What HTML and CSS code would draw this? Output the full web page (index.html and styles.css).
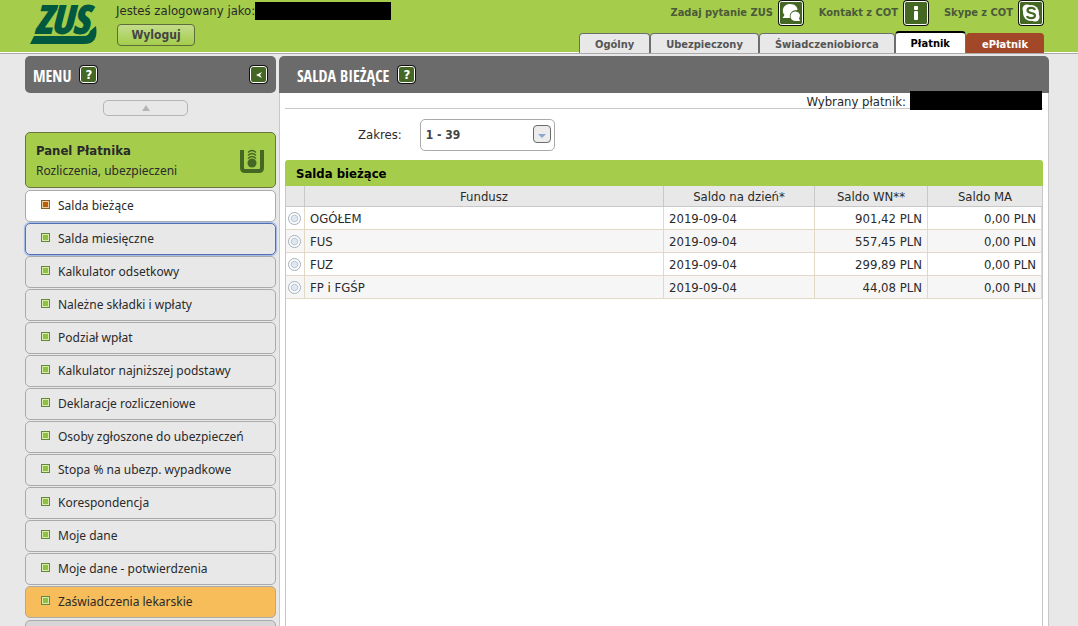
FILE: index.html
```html
<!DOCTYPE html>
<html lang="pl">
<head>
<meta charset="utf-8">
<title>Salda bieżące</title>
<link rel="stylesheet" href="styles.css">
</head>
<body>
<header class="top">
  <a class="logo" href="#" aria-label="ZUS">
    <svg viewBox="0 0 68 43" width="68" height="43">
      <text class="logo-text" x="5" y="31">ZUS</text>
      <path d="M4 34H54Q59 34 60 29L66 24Q69 42 54 42H0Z" fill="#00583f"/>
    </svg>
  </a>
  <div class="login">
    <div class="login-line">Jesteś zalogowany jako:<span class="redacted name"></span></div>
    <button class="logout" type="button">Wyloguj</button>
  </div>
  <div class="top-right">
    <nav class="contacts">
      <a href="#">Zadaj pytanie ZUS
        <svg class="contact-icon" viewBox="0 0 26 26"><rect class="edge" x=".5" y=".5" width="25" height="25" rx="3"/><rect class="face" x="1.5" y="1.5" width="23" height="23" rx="2"/><path d="M12 4C17 4 19.500 7 19.500 10C14 10 11 13 12 18H4.500L6.500 15C3 11 5 4 12 4Z" fill="#fff"/><path d="M17 11.500C22 11.500 23 16 21 18L22 21H17C11 21 11 11.500 17 11.500Z" fill="#fff"/></svg></a>
      <a href="#">Kontakt z COT
        <svg class="contact-icon" viewBox="0 0 26 26"><rect class="edge" x=".5" y=".5" width="25" height="25" rx="3"/><rect class="face" x="1.5" y="1.5" width="23" height="23" rx="2"/><rect x="11" y="6" width="4" height="4" rx="1" fill="#fff"/><rect x="11" y="11" width="4" height="9" rx="1" fill="#fff"/></svg></a>
      <a href="#">Skype z COT
        <svg class="contact-icon" viewBox="0 0 26 26"><rect class="edge" x=".5" y=".5" width="25" height="25" rx="3"/><rect class="face" x="1.5" y="1.5" width="23" height="23" rx="2"/><circle cx="13" cy="13" r="8" fill="#fff"/><circle cx="9" cy="9" r="4.5" fill="#fff"/><circle cx="17" cy="17" r="4.5" fill="#fff"/><path d="M17 10C16 7 9.500 7 9.500 10.500C9.500 14 17 12 17 15.500C17 19 10 19 9 16" fill="none" stroke="#446823" stroke-width="2.200"/></svg></a>
    </nav>
    <nav class="tabs">
      <a class="tab" href="#">Ogólny</a>
      <a class="tab" href="#">Ubezpieczony</a>
      <a class="tab" href="#">Świadczeniobiorca</a>
      <a class="tab active" href="#">Płatnik</a>
      <a class="tab red" href="#">ePłatnik</a>
    </nav>
  </div>
</header>
<div class="page">
  <aside class="side">
    <div class="bar">
      <h2>MENU</h2>
      <button class="mini" type="button" aria-label="Pomoc">?</button>
      <button class="mini collapse" type="button" aria-label="Zwiń menu"><svg viewBox="0 0 8 8" width="8" height="8"><path d="M7 1L5 4L7 7L1 4Z" fill="#fff"/></svg></button>
    </div>
    <button class="scroll-up" type="button" aria-label="W górę"><svg viewBox="0 0 8 6" width="8" height="6"><path d="M4 0L8 6H0Z" fill="#b5b5b5"/></svg></button>
    <a class="panel" href="#">
      <span class="panel-text"><strong>Panel Płatnika</strong><span>Rozliczenia, ubezpieczeni</span></span>
      <svg viewBox="0 0 24 24" width="24" height="24"><path d="M2 1V19Q2 22 5 22H19Q22 22 22 19V1" fill="none" stroke="#446823" stroke-width="4"/><circle cx="12" cy="14" r="4.500" fill="#446823"/><path d="M8 9.500Q12 5.500 16 9.500M8 6.500Q12 2.500 16 6.500M8 3.500Q12 -.5 16 3.500" fill="none" stroke="#446823" stroke-width="1.500"/></svg>
    </a>
    <nav class="menu">
      <a class="item current" href="#">Salda bieżące</a>
      <a class="item focused" href="#">Salda miesięczne</a>
      <a class="item" href="#">Kalkulator odsetkowy</a>
      <a class="item" href="#">Należne składki i wpłaty</a>
      <a class="item" href="#">Podział wpłat</a>
      <a class="item" href="#">Kalkulator najniższej podstawy</a>
      <a class="item" href="#">Deklaracje rozliczeniowe</a>
      <a class="item" href="#">Osoby zgłoszone do ubezpieczeń</a>
      <a class="item" href="#">Stopa % na ubezp. wypadkowe</a>
      <a class="item" href="#">Korespondencja</a>
      <a class="item" href="#">Moje dane</a>
      <a class="item" href="#">Moje dane - potwierdzenia</a>
      <a class="item orange" href="#">Zaświadczenia lekarskie</a>
    </nav>
    <div class="next-panel"></div>
  </aside>
  <main class="main">
    <div class="bar main-bar">
      <h1>SALDA BIEŻĄCE</h1>
      <button class="mini" type="button" aria-label="Pomoc">?</button>
    </div>
    <div class="content">
      <div class="payer">Wybrany płatnik:<span class="redacted payer-name"></span></div>
      <div class="filter">
        <label for="range">Zakres:</label>
        <div class="select-wrap">
          <select id="range"><option>1 - 39</option></select>
          <span class="arrow"><svg viewBox="0 0 8 4" width="8" height="4"><path d="M0 0H8L4 4Z" fill="#8ea6d0"/></svg></span>
        </div>
      </div>
      <section class="grid">
        <h3>Salda bieżące</h3>
        <div class="grid-body">
        <table>
          <colgroup><col class="c-pick"><col><col class="c-date"><col class="c-wn"><col class="c-ma"></colgroup>
          <thead><tr><th></th><th>Fundusz</th><th>Saldo na dzień*</th><th>Saldo WN**</th><th>Saldo MA</th></tr></thead>
          <tbody>
            <tr><td><input type="radio" name="fund" aria-label="OGÓŁEM"></td><td>OGÓŁEM</td><td>2019-09-04</td><td class="num">901,42 PLN</td><td class="num">0,00 PLN</td></tr>
            <tr><td><input type="radio" name="fund" aria-label="FUS"></td><td>FUS</td><td>2019-09-04</td><td class="num">557,45 PLN</td><td class="num">0,00 PLN</td></tr>
            <tr><td><input type="radio" name="fund" aria-label="FUZ"></td><td>FUZ</td><td>2019-09-04</td><td class="num">299,89 PLN</td><td class="num">0,00 PLN</td></tr>
            <tr><td><input type="radio" name="fund" aria-label="FP i FGŚP"></td><td>FP i FGŚP</td><td>2019-09-04</td><td class="num">44,08 PLN</td><td class="num">0,00 PLN</td></tr>
          </tbody>
        </table>
        </div>
      </section>
    </div>
  </main>
</div>
</body>
</html>
```
FILE: styles.css
```css
*, *::before { box-sizing: border-box; }
body {
  margin: 0;
  height: 100vh;
  overflow: hidden;
  display: flex;
  flex-direction: column;
  background: #e8e8e8;
  color: #2a2a2a;
  font: 13px/18px Tahoma, "DejaVu Sans Condensed", "Noto Sans", sans-serif;
}
a { color: inherit; text-decoration: none; }
button { font: inherit; padding: 0; }
h1, h2, h3 { margin: 0; }
.redacted { background: #000; }

.top {
  flex: none;
  display: flex;
  height: 54px;
  padding: 0 34px 0 30px;
  background: #a5cd4b;
  border-bottom: 1px solid #aaa;
  box-shadow: inset 0 -1px #fff;
}
.logo { padding-top: 2px; }
.logo svg { display: block; overflow: visible; }
.logo-text { font: italic bold 38px "Open Sans Condensed", "Liberation Sans Narrow", "Liberation Sans", sans-serif; fill: #00583f; stroke: #00583f; stroke-width: 2px; }
.login { padding: 2px 0 0 18px; }
.login-line { display: flex; }
.name { width: 136px; height: 18px; }
.logout {
  display: block;
  width: 78px;
  height: 22px;
  margin: 4px 0 0 1px;
  border: 1px solid #5e6c3c;
  border-radius: 4px;
  background: linear-gradient(#c3dc8b, #a5cd4b);
  color: #444;
  font-size: 12px;
  font-weight: bold;
}
.top-right {
  margin-left: auto;
  display: flex;
  flex-direction: column;
  justify-content: space-between;
  align-items: flex-end;
  font-size: 11px;
  font-weight: bold;
  color: #4b5a3a;
}
.contacts { display: flex; gap: 15px; }
.contacts a { display: flex; align-items: center; gap: 5px; height: 26px; }
.contact-icon { width: 26px; height: 26px; }
.edge { fill: #111; stroke: #111; }
.face { fill: #446823; stroke: #fff; }
.tabs { display: flex; align-items: flex-end; }
.tab {
  height: 20px;
  padding: 2px 15px 0;
  border: 1px solid #6d6d6d;
  border-bottom: 0;
  border-radius: 4px 4px 0 0;
  background: #e8e8e8;
  color: #555;
}
.tab.active { height: 22px; border-top: 2px solid #000; background: #fff; color: #000; }
.tab.red { border-color: #a24728; background: #a24728; color: #fff; }

.page {
  flex: 1;
  min-height: 0;
  display: flex;
  gap: 3px;
  padding: 2px 29px 0 25px;
}
.side { flex: none; width: 251px; }
.bar {
  display: flex;
  align-items: center;
  gap: 9px;
  height: 37px;
  padding: 0 9px 0 8px;
  background: #6b6b6b;
  border-radius: 5px;
  color: #fff;
}
.bar h1, .bar h2 {
  padding-top: 2px;
  font: 16px/20px "Liberation Sans Narrow", "Open Sans Condensed", "Liberation Sans", sans-serif;
}
.mini {
  display: flex;
  align-items: center;
  justify-content: center;
  width: 17px;
  height: 17px;
  border: 1px solid #fff;
  border-radius: 3px;
  outline: 1px solid #111;
  background: #446823;
  color: #fff;
  font-weight: bold;
}
.collapse { margin-left: auto; }
.scroll-up {
  display: flex;
  align-items: center;
  justify-content: center;
  width: 85px;
  height: 16px;
  margin: 7px 0 0 78px;
  border: 1px solid #b5b5b5;
  border-radius: 5px;
  background: transparent;
}
.panel {
  display: flex;
  align-items: center;
  justify-content: space-between;
  height: 56px;
  margin-top: 16px;
  padding: 2px 11px 0 10px;
  border: 1px solid #66783c;
  border-radius: 5px;
  background: #a5cd4b;
}
.panel-text { display: flex; flex-direction: column; line-height: 20px; }
.menu { display: flex; flex-direction: column; gap: 1px; padding-top: 2px; }
.panel-text span, .item { font-family: Tahoma, "Noto Sans", sans-serif; font-size: 12px; }
.item {
  display: flex;
  align-items: center;
  gap: 8px;
  height: 32px;
  padding-left: 15px;
  border: 1px solid #aaa;
  border-radius: 5px;
}
.item::before {
  content: "";
  width: 9px;
  height: 9px;
  margin-bottom: 3px;
  border: 1px solid #64883a;
  box-shadow: inset 0 0 0 1px #d9ecae;
  background: #8fc043;
}
.current { background: #fff; }
.current::before { border-color: #89602a; box-shadow: inset 0 0 0 1px #e9cfa0; background: #bb5d0c; }
.focused { border-color: #5470b4; box-shadow: 0 0 1px 1px #9db6e6; }
.orange { background: #f6bd5a; }
.next-panel { height: 56px; margin-top: 2px; border: 1px solid #aaa; border-radius: 5px; background: #d6d6d6; }

.main {
  flex: 1;
  min-width: 0;
  display: flex;
  flex-direction: column;
  background: #fff;
  border-radius: 5px 5px 0 0;
}
.main-bar { flex: none; padding-left: 18px; border-radius: 5px 5px 0 0; }
.content {
  flex: 1;
  display: flex;
  flex-direction: column;
  padding: 0 5px;
  border: solid #c8c8c8;
  border-width: 0 1px;
}
.payer {
  display: flex;
  justify-content: flex-end;
  gap: 4px;
  height: 16px;
  padding-right: 1px;
  border-bottom: 1px solid #c8c8c8;
}
.payer-name { width: 132px; height: 19px; margin-top: -2px; }
.filter { display: flex; align-items: center; gap: 18px; padding: 10px 0 9px 73px; }
.select-wrap { position: relative; }
.select-wrap select {
  display: block;
  appearance: none;
  width: 135px;
  height: 32px;
  padding: 0 5px;
  border: 1px solid #aaa;
  border-radius: 5px;
  background: #fff;
  color: #444;
  font: bold 12px "DejaVu Sans Condensed", "Noto Sans", sans-serif;
}
.arrow {
  position: absolute;
  top: 6px;
  right: 4px;
  display: flex;
  align-items: center;
  justify-content: center;
  width: 18px;
  height: 18px;
  padding-top: 4px;
  border: 1px solid #6b6b6b;
  border-radius: 4px;
  background: #ececec;
  pointer-events: none;
}
.grid { flex: 1; display: flex; flex-direction: column; }
.grid h3 {
  padding: 5px 11px 3px;
  border-radius: 3px 3px 0 0;
  background: #a5cd4b;
  color: #000;
  font-size: 13px;
  line-height: 18px;
}
.grid-body { flex: 1; border: solid #c8c8c8; border-width: 0 1px; }
table { width: 100%; table-layout: fixed; border-collapse: separate; border-spacing: 0; }
.c-pick { width: 19px; }
.c-date { width: 151px; }
.c-wn { width: 113px; }
.c-ma { width: 114px; }
th {
  height: 21px;
  padding: 1px 0 0;
  border: solid #c8c8c8;
  border-width: 0 1px 1px 0;
  background: #e8e8e8;
  font-weight: normal;
}
td {
  height: 23px;
  padding: 1px 5px 0;
  border: solid #e2d8c6;
  border-width: 0 1px 1px 0;
}
th:last-child { border-right: 0; }
td:first-child { padding: 0 2px; }
tbody tr:nth-child(even) { background: #f6f6f6; }
.num { text-align: right; }
input[type="radio"] {
  appearance: none;
  display: block;
  width: 13px;
  height: 13px;
  margin: 0;
  border: 1px solid #a5aeb8;
  border-radius: 50%;
  background: radial-gradient(#dde8f2 30%, #b9c5d2 42%, #fff 55%);
}
```
